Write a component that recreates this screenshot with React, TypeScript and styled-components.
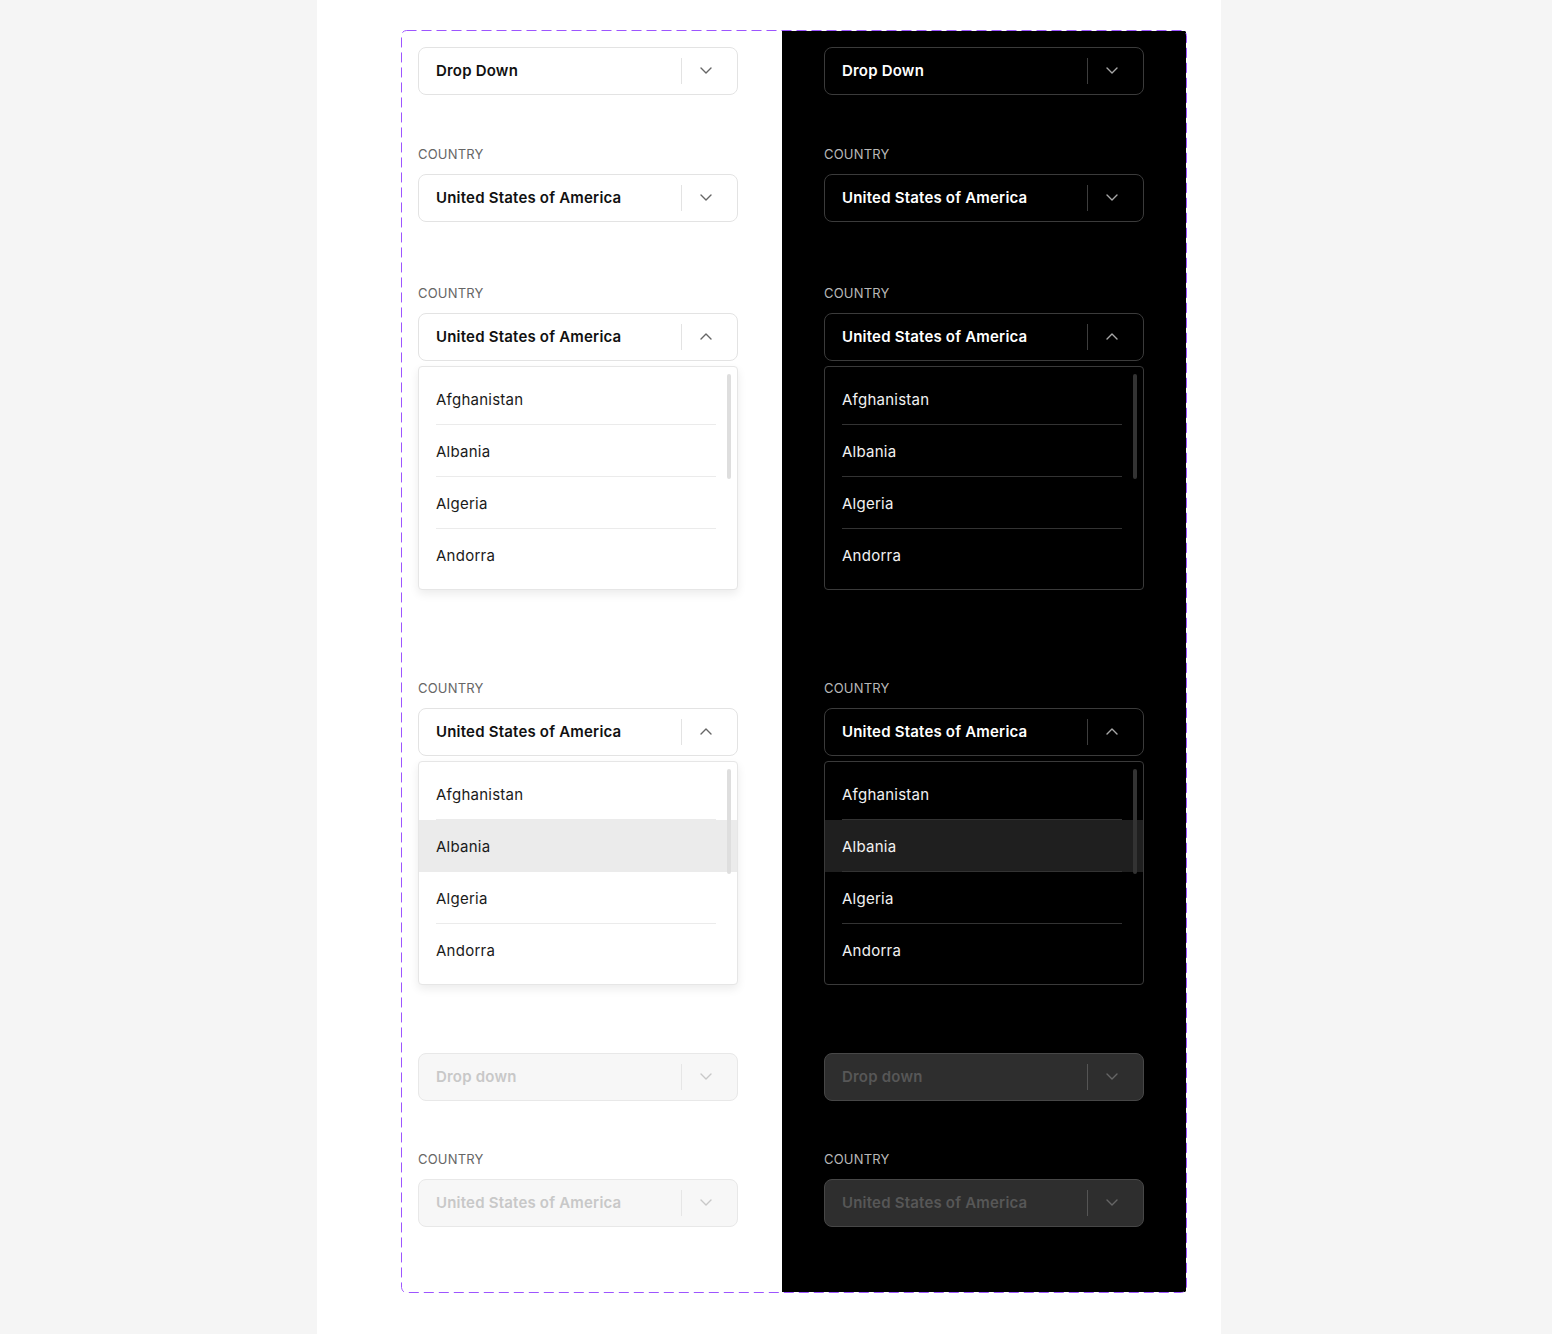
import React from 'react';
import styled, { createGlobalStyle, css } from 'styled-components';

const GlobalStyle = createGlobalStyle`
  html, body {
    margin: 0;
    padding: 0;
    background: #f5f5f5;
  }
  body {
    font-family: Inter, 'Noto Sans', 'Liberation Sans', sans-serif;
    -webkit-font-smoothing: antialiased;
  }
`;

const countries = ['Afghanistan', 'Albania', 'Algeria', 'Andorra'];

type Item = {
  mt: number;
  value: string;
  label?: string;
  open?: boolean;
  hover?: number;
  disabled?: boolean;
};

const items: Item[] = [
  { mt: 0, value: 'Drop Down' },
  { mt: 50, value: 'United States of America', label: 'Country' },
  { mt: 62, value: 'United States of America', label: 'Country', open: true },
  { mt: 89, value: 'United States of America', label: 'Country', open: true, hover: 1 },
  { mt: 68, value: 'Drop down', disabled: true },
  { mt: 49, value: 'United States of America', label: 'Country', disabled: true },
];

const Chevron = ({ up }: { up?: boolean }) => (
  <svg width='12' height='7' viewBox='0 0 12 7' fill='none'>
    <path
      d={up ? 'M1 6l5-5 5 5' : 'M1 1l5 5 5-5'}
      stroke='currentColor'
      strokeWidth='1.4'
      strokeLinecap='round'
      strokeLinejoin='round'
    />
  </svg>
);

const Dropdown = ({ item, dark }: { item: Item; dark: boolean }) => (
  <Block $mt={item.mt}>
    {item.label && <Label $dark={dark}>{item.label}</Label>}
    <Trigger $dark={dark} $disabled={item.disabled}>
      <Value>{item.value}</Value>
      <Separator $dark={dark} $disabled={item.disabled} />
      <Arrow $dark={dark} $disabled={item.disabled}>
        <Chevron up={item.open} />
      </Arrow>
    </Trigger>
    {item.open && (
      <List $dark={dark}>
        {countries.map((c, i) => (
          <Option key={c} $dark={dark} $hover={item.hover === i}>
            <OptionInner $dark={dark} $last={i === countries.length - 1}>
              {c}
            </OptionInner>
          </Option>
        ))}
        <Thumb $dark={dark} />
      </List>
    )}
  </Block>
);

export default function App() {
  return (
    <>
      <GlobalStyle />
      <Page>
        <Frame>
          <Column $dark={false}>
            {items.map((item, i) => (
              <Dropdown key={i} item={item} dark={false} />
            ))}
          </Column>
          <Column $dark>
            {items.map((item, i) => (
              <Dropdown key={i} item={item} dark />
            ))}
          </Column>
          <Outline width='100%' height='100%'>
            <rect
              x='0.5'
              y='0.5'
              width='785'
              height='1262'
              rx='5'
              fill='none'
              stroke='#9d55ff'
              strokeDasharray='10 5'
            />
          </Outline>
        </Frame>
      </Page>
    </>
  );
}

const Page = styled.div`
  box-sizing: border-box;
  width: 904px;
  min-height: 1334px;
  margin-left: 317px;
  padding: 30px 0 0 84px;
  background: #fff;
`;

const Frame = styled.div`
  position: relative;
  display: flex;
  width: 786px;
  padding: 1px;
  box-sizing: border-box;
  border-radius: 5px;
  overflow: hidden;
`;

const Outline = styled.svg`
  position: absolute;
  inset: 0;
  pointer-events: none;
`;

const Column = styled.div<{ $dark: boolean }>`
  display: flex;
  flex-direction: column;
  box-sizing: border-box;
  width: ${(p) => (p.$dark ? '404px' : '380px')};
  padding: ${(p) => (p.$dark ? '16px 0 65px 42px' : '16px 0 65px 16px')};
  background: ${(p) => (p.$dark ? '#000' : '#fff')};
`;

const Block = styled.div<{ $mt: number }>`
  display: flex;
  flex-direction: column;
  margin-top: ${(p) => p.$mt}px;
`;

const Label = styled.div<{ $dark: boolean }>`
  height: 16px;
  padding-top: 1px;
  margin-bottom: 12px;
  font-size: 13px;
  line-height: 16px;
  text-transform: uppercase;
  letter-spacing: 0.2px;
  color: ${(p) => (p.$dark ? '#b8b8b8' : '#666')};
`;

const Trigger = styled.div<{ $dark: boolean; $disabled?: boolean }>`
  display: flex;
  align-items: center;
  box-sizing: border-box;
  width: 320px;
  height: 48px;
  padding: 0 25px 1px 17px;
  border-radius: 8px;
  font-size: 15px;
  font-weight: 600;
  letter-spacing: 0.2px;
  ${(p) =>
    p.$dark
      ? css`
          border: 1px solid ${p.$disabled ? '#474747' : '#3b3b3b'};
          background: ${p.$disabled ? '#2e2e2e' : '#000'};
          color: ${p.$disabled ? '#575757' : '#fff'};
        `
      : css`
          border: 1px solid ${p.$disabled ? '#e8e8e8' : '#e3e3e3'};
          background: ${p.$disabled ? '#f7f7f7' : '#fff'};
          color: ${p.$disabled ? '#c8c8c8' : '#111'};
        `}
`;

const Value = styled.span`
  flex: 1;
  white-space: nowrap;
`;

const Separator = styled.span<{ $dark: boolean; $disabled?: boolean }>`
  width: 1px;
  height: 26px;
  margin-top: 1px;
  margin-right: 18px;
  background: ${(p) =>
    p.$dark ? (p.$disabled ? '#555' : '#3d3d3d') : p.$disabled ? '#e6e6e6' : '#e3e3e3'};
`;

const Arrow = styled.span<{ $dark: boolean; $disabled?: boolean }>`
  display: flex;
  width: 12px;
  color: ${(p) =>
    p.$dark ? (p.$disabled ? '#666' : '#a8a8a8') : p.$disabled ? '#c8c8c8' : '#666'};
`;

const List = styled.div<{ $dark: boolean }>`
  position: relative;
  box-sizing: border-box;
  width: 320px;
  margin-top: 5px;
  padding: 6px 0 8px;
  border-radius: 4px;
  font-size: 15px;
  letter-spacing: 0.25px;
  ${(p) =>
    p.$dark
      ? css`
          border: 1px solid #3a3a3a;
          background: #000;
          color: #f2f2f2;
        `
      : css`
          border: 1px solid #e6e6e6;
          background: #fff;
          color: #1a1a1a;
          box-shadow: 0 4px 10px rgba(0, 0, 0, 0.08);
        `}
`;

const Option = styled.div<{ $dark: boolean; $hover: boolean }>`
  padding: 0 21px 0 17px;
  background: ${(p) => (p.$hover ? (p.$dark ? '#1f1f1f' : '#ebebeb') : 'transparent')};
`;

const OptionInner = styled.div<{ $dark: boolean; $last: boolean }>`
  display: flex;
  align-items: center;
  box-sizing: border-box;
  height: 52px;
  padding-top: 1px;
  border-bottom: 1px solid
    ${(p) => (p.$last ? 'transparent' : p.$dark ? '#333' : '#ebebeb')};
`;

const Thumb = styled.div<{ $dark: boolean }>`
  position: absolute;
  top: 7px;
  right: 6px;
  width: 4px;
  height: 105px;
  border-radius: 2px;
  background: ${(p) => (p.$dark ? '#333' : '#dedede')};
`;
